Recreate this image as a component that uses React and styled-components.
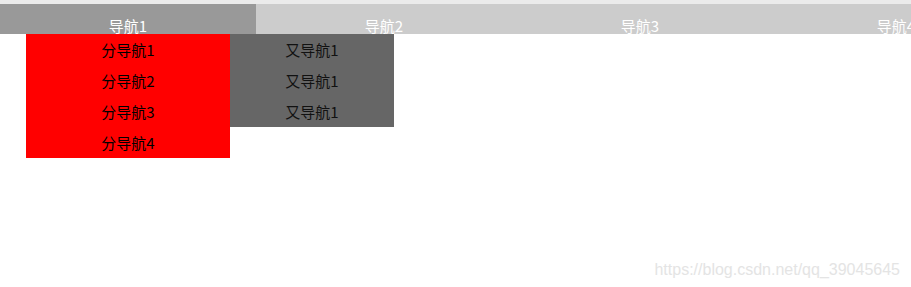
import React from 'react'
import styled, { createGlobalStyle } from 'styled-components'

const Global = createGlobalStyle`
    html, body {
        margin: 0;
        padding: 0;
        background: #fff;
    }
    body {
        font-family: "Noto Sans CJK SC", "Noto Sans", sans-serif;
        width: 911px;
        height: 287px;
        overflow: hidden;
        position: relative;
    }
`

const TopStrip = styled.div`
    height: 4px;
    background: #ebebeb;
`

const NavBar = styled.ul`
    display: flex;
    margin: 0;
    padding: 0;
    list-style: none;
    height: 30px;
    width: 100%;
`

const NavItem = styled.li`
    position: relative;
    flex: 0 0 256px;
    height: 30px;
    background: ${p => (p.$active ? '#999999' : '#cccccc')};
    color: #fff;
    font-size: 15px;
    text-align: center;
    .label {
        display: block;
        padding-top: 13px;
        line-height: 18px;
    }
`

const Menu = styled.ul`
    position: absolute;
    top: 30px;
    left: ${p => p.$left}px;
    width: ${p => p.$width}px;
    margin: 0;
    padding: 0;
    list-style: none;
    background: ${p => p.$bg};
    z-index: 2;
`

const MenuItem = styled.li`
    height: 31px;
    line-height: 31px;
    text-align: center;
    font-size: 15px;
    color: ${p => p.$color};
`

const Watermark = styled.div`
    position: absolute;
    right: 11px;
    bottom: 8px;
    font-family: "Liberation Sans", Arial, sans-serif;
    font-size: 16px;
    color: #e4e4e4;
`

export default function App() {
    const subs = ['分导航1', '分导航2', '分导航3', '分导航4']
    const more = ['又导航1', '又导航1', '又导航1']
    return (
        <>
            <Global />
            <TopStrip />
            <NavBar>
                <NavItem $active>
                    <span className="label">导航1</span>
                    <Menu $left={26} $width={204} $bg="#ff0000">
                        {subs.map((s, i) => (
                            <MenuItem key={i} $color="#000">{s}</MenuItem>
                        ))}
                    </Menu>
                    <Menu $left={230} $width={164} $bg="#666666">
                        {more.map((s, i) => (
                            <MenuItem key={i} $color="#111">{s}</MenuItem>
                        ))}
                    </Menu>
                </NavItem>
                <NavItem><span className="label">导航2</span></NavItem>
                <NavItem><span className="label">导航3</span></NavItem>
                <NavItem><span className="label">导航4</span></NavItem>
            </NavBar>
            <Watermark>https://blog.csdn.net/qq_39045645</Watermark>
        </>
    )
}
